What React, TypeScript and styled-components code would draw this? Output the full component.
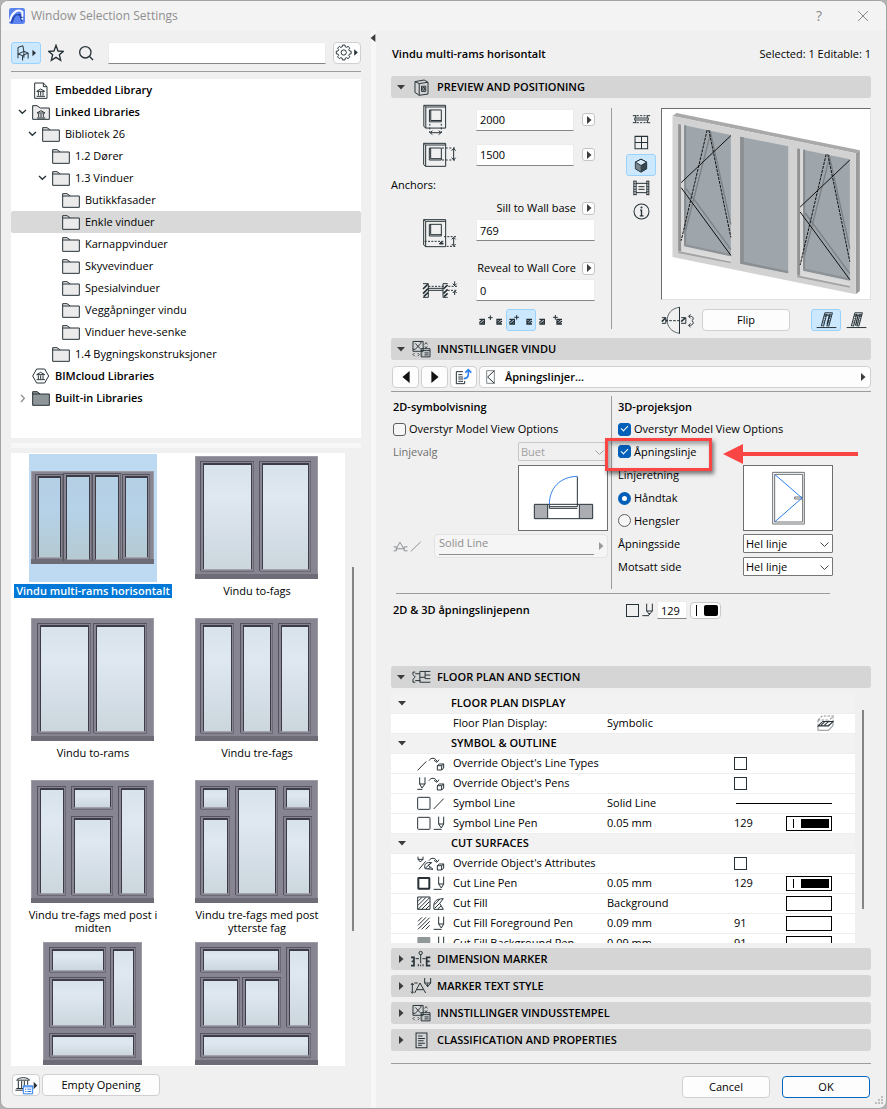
import React from "react";
import type { ReactNode } from "react";
import styled, { createGlobalStyle, css } from "styled-components";

const INK = "#263238";
const BLUE = "#2f80ed";
const FONT = '"Open Sans", "Noto Sans", "Liberation Sans", sans-serif';
const BOLD = 600;

const GlobalStyle = createGlobalStyle`
  *, *::before, *::after { box-sizing: border-box; }
  body { margin: 0; background: #b4b2b2; font: 11px/14px ${FONT}; color: #000; }
  button, input, select { font: inherit; color: inherit; margin: 0; }
  button { cursor: default; }
`;

/* ---------- shell ---------- */
const Dialog = styled.div`
  position: relative;
  display: flex;
  flex-direction: column;
  height: 100vh;
  background: #f0f0f0;
  border: 1px solid #a3a3a3;
  border-radius: 8px;
  overflow: hidden;
`;
const TitleBar = styled.header`
  display: flex;
  align-items: center;
  gap: 6px;
  flex: 0 0 30px;
  padding: 0 8px;
  background: #f3f3f3;
`;
const Title = styled.h1`
  flex: 1;
  margin: 0;
  font-size: 12px;
  line-height: 16px;
  font-weight: 400;
  color: #8f8f8f;
`;
const CaptionButton = styled.button`
  display: flex;
  align-items: center;
  justify-content: center;
  width: 30px;
  height: 24px;
  margin-left: 8px;
  padding: 0;
  border: 0;
  background: none;
  font-size: 14px;
  color: #8a8a8a;
`;
const Main = styled.main`
  flex: 1;
  min-height: 0;
  display: grid;
  grid-template-columns: minmax(0, 370fr) 5px minmax(0, 510fr);
  grid-template-rows: minmax(0, 1fr);
`;
const Left = styled.section`
  display: flex;
  flex-direction: column;
  min-height: 0;
  padding: 10px 10px 12px;
`;
const Splitter = styled.div`
  background: #f7f7f7;
  padding-top: 3px;
  svg { display: block; margin-left: -2px; }
`;
const Right = styled.section`
  display: flex;
  flex-direction: column;
  min-height: 0;
  padding: 0 15px 10px;
`;
const Rule = styled.hr<{ $top?: number; $bottom?: number }>`
  flex: none;
  height: 1px;
  width: 100%;
  margin: ${(p) => p.$top ?? 0}px 0 ${(p) => p.$bottom ?? 0}px;
  border: 0;
  background: #9c9c9c;
`;
const PenRule = styled.hr`
  width: 434px;
  height: 1px;
  margin: 0 0 0 5px;
  border: 0;
  background: #9c9c9c;
`;

/* ---------- controls ---------- */
const PushButton = styled.button<{ $width?: number; $primary?: boolean }>`
  display: flex;
  flex: none;
  align-items: center;
  justify-content: center;
  height: 22px;
  width: ${(p) => (p.$width ? p.$width + "px" : "auto")};
  padding: 0;
  background: #fdfdfd;
  border: 1px solid ${(p) => (p.$primary ? "#0067c0" : "#d0d0d0")};
  border-radius: 4px;
`;
const ToolButton = styled.button<{ $active?: boolean }>`
  display: flex;
  flex: none;
  align-items: center;
  justify-content: center;
  width: 30px;
  height: 22px;
  padding: 0;
  border: 1px solid ${(p) => (p.$active ? "#99d1ff" : "transparent")};
  border-radius: 3px;
  background: ${(p) => (p.$active ? "#cce8ff" : "transparent")};
`;
const PopButton = styled.button`
  display: flex;
  align-items: center;
  justify-content: center;
  width: 13px;
  height: 13px;
  padding: 0;
  background: #fdfdfd;
  border: 1px solid #c4c4c4;
  border-radius: 3px;
`;
const TextField = styled.input<{ $width?: number; $height?: number }>`
  width: ${(p) => (p.$width ? p.$width + "px" : "100%")};
  height: ${(p) => p.$height ?? 22}px;
  min-width: 0;
  padding: 0 3px;
  background: #fff;
  border: 1px solid #ececec;
  border-bottom-color: #868686;
  border-radius: 0;
  outline: none;
`;
const CheckBox = styled.input.attrs({ type: "checkbox" })<{ $square?: boolean }>`
  appearance: none;
  flex: none;
  display: grid;
  place-items: center;
  width: 13px;
  height: 13px;
  margin: 0;
  background: ${(p) => (p.$square ? "transparent" : "#f6f6f6")};
  border: 1px solid ${(p) => (p.$square ? INK : "#5e5e5e")};
  border-radius: ${(p) => (p.$square ? 0 : 3)}px;
  &:checked { background: #005fb8; border-color: #005fb8; }
  &:checked::after {
    content: "";
    width: 7px;
    height: 4px;
    border-left: 1px solid #fff;
    border-bottom: 1px solid #fff;
    transform: rotate(-45deg) translate(1px, -1px);
  }
`;
const Radio = styled.input.attrs({ type: "radio" })`
  appearance: none;
  flex: none;
  width: 13px;
  height: 13px;
  margin: 0;
  border: 1px solid #5e5e5e;
  border-radius: 50%;
  background: #f6f6f6;
  &:checked { border: 4px solid #005fb8; background: #fff; }
`;
const SelectBox = styled.span<{ $disabled?: boolean }>`
  position: relative;
  display: block;
  width: 90px;
  height: 19px;
  color: ${(p) => (p.$disabled ? "#a0a0a0" : "#000")};
  select {
    appearance: none;
    width: 100%;
    height: 100%;
    padding: 0 18px 0 2px;
    border: 1px solid ${(p) => (p.$disabled ? "#c8c8c8" : "#767676")};
    border-radius: 1px;
    background: ${(p) => (p.$disabled ? "#f0f0f0" : "#fff")};
    color: inherit;
    opacity: 1;
  }
  svg { position: absolute; right: 4px; top: 8px; pointer-events: none; }
`;

function Select({ label, value, disabled }: { label: string; value: string; disabled?: boolean }) {
  return (
    <SelectBox $disabled={disabled}>
      <select aria-label={label} defaultValue={value} disabled={disabled}>
        <option>{value}</option>
      </select>
      <svg width="9" height="6" viewBox="0 0 9 6" fill="none" stroke={disabled ? "#a0a0a0" : "#444"}>
        <path d="M.5 .5 4.5 4.5 8.5 .5" />
      </svg>
    </SelectBox>
  );
}

/* ---------- drawings: view boxes are in thirds of a pixel ---------- */
type ArtProps = { box: [number, number, number, number]; children: ReactNode; color?: string; sw?: number };
function Art({ box, children, color = INK, sw = 3 }: ArtProps) {
  return (
    <svg
      aria-hidden="true"
      width={Math.round(box[2] / 3)}
      height={Math.round(box[3] / 3)}
      viewBox={box.join(" ")}
      fill="none"
      stroke={color}
      strokeWidth={sw}
    >
      {children}
    </svg>
  );
}
type TriangleProps = { down?: boolean; left?: boolean; color?: string; size?: number };
const Triangle = ({ down, left, color = "#3c3c3c", size = 10 }: TriangleProps) => (
  <svg aria-hidden="true" width={size} height={size} viewBox="0 0 10 10" fill={color}>
    <path d={down ? "M1 3H9L5 7.500Z" : left ? "M8 0V10L2 5Z" : "M3 1V9L7.500 5Z"} />
  </svg>
);

const LogoIcon = () => (
  <svg aria-hidden="true" width="16" height="16" viewBox="0 0 48 48">
    <rect width="48" height="48" rx="7" fill="#5b84ee" />
    <path d="M4 44C10 20 28 12 40 20V42C32 40 36 24 26 22 18 22 14 34 12 44Z" fill="#2545b5" />
    <path d="M3 38C9 12 28 1 40 12V24" fill="none" stroke="#fff" strokeWidth="6" strokeLinecap="round" />
    <circle cx="40" cy="32" r="3" fill="#fff" />
  </svg>
);
const ChairIcon = () => (
  <Art box={[50, 130, 64, 54]}>
    <path d="M56 173V140L71 135 74 152M56 160 74 152 87 157 70 165ZM70 165V180M87 157V174M74 152V172" />
    <path d="M100 147V167L111 157Z" fill={INK} stroke="none" />
  </Art>
);
const StarIcon = () => (
  <Art box={[144, 130, 48, 54]} sw={4}>
    <path d="M168 134 174 151 190 152 178 162 182 179 168 170 154 179 158 162 146 152 162 151Z" />
  </Art>
);
const SearchIcon = () => (
  <Art box={[234, 132, 48, 48]} sw={4}>
    <circle cx="256" cy="154" r="17" />
    <path d="M268 166 279 177" />
  </Art>
);
const GearIcon = () => {
  const pts: string[] = [];
  for (let i = 0; i < 8; i++) {
    for (const [o, r] of [[-15, 18], [-10, 23], [10, 23], [15, 18]]) {
      const a = ((i * 45 + o) * Math.PI) / 180;
      pts.push(`${(26 + r * Math.cos(a)).toFixed(1)},${(26 + r * Math.sin(a)).toFixed(1)}`);
    }
  }
  return (
    <Art box={[0, 0, 72, 52]}>
      <polygon points={pts.join(" ")} />
      <circle cx="26" cy="26" r="8" />
      <path d="M58 16V36L69 26Z" fill={INK} stroke="none" />
    </Art>
  );
};
const Temple = ({ x, y }: { x: number; y: number }) => (
  <g transform={`translate(${x} ${y})`}>
    <path d="M0 7 12 0 24 7ZM5 9V20M12 9V20M19 9V20M0 22H25" />
  </g>
);
type TreeKind = "file" | "linked" | "folder" | "cloud" | "builtin";
const TreeIcon = ({ kind }: { kind: TreeKind }) => {
  if (kind === "file")
    return (
      <Art box={[0, 0, 54, 51]}>
        <path d="M8 3H34L45 14V49H8ZM34 3V14H45" />
        <Temple x={14} y={21} />
      </Art>
    );
  if (kind === "cloud")
    return (
      <Art box={[0, 0, 54, 48]}>
        <path d="M2 24 14 3H38L50 24 38 45H14Z" />
        <Temple x={14} y={13} />
      </Art>
    );
  return (
    <Art box={[0, 0, 54, 45]}>
      <path d="M2 43V2H15L25 9H52V43Z" fill={kind === "builtin" ? "#8f9699" : "#ebebeb"} />
      {kind !== "linked" && <path d="M2 9H25" />}
      {kind === "linked" && <Temple x={15} y={17} />}
    </Art>
  );
};
const BoxWindow = () => <path d="M131 194H197V263H137L131 258ZM137 199V263M131 194 137 199H197M148 208H184V244H148ZM152 208V240H184" />;
const WidthIcon = () => (
  <Art box={[126, 190, 105, 97]}>
    <BoxWindow />
    <path d="M149 250V283M184 250V283" strokeDasharray="6 5" />
    <path d="M151 277H182M157 271 150 277 157 283M176 271 183 277 176 283" />
  </Art>
);
const HeightIcon = () => (
  <Art box={[126, 190, 105, 78]}>
    <BoxWindow />
    <path d="M186 208H228M186 244H228" strokeDasharray="6 5" />
    <path d="M221 211V241M215 216 221 209 227 216M215 237 221 244 227 237" />
  </Art>
);
const SillIcon = () => (
  <Art box={[126, 534, 105, 90]}>
    <path d="M131 539H197V620H137L131 615ZM137 544V620M131 539 137 544H197M148 553H184V588H148ZM152 553V584H184" />
    <path d="M134 604H190M192 590H228M200 619H228" strokeDasharray="6 4" />
    <path d="M178 612 184 605 190 612Z" fill={INK} />
    <path d="M221 593V616M215 598 221 592 227 598M215 612 221 618 227 612" />
  </Art>
);
const RevealIcon = () => (
  <Art box={[123, 726, 108, 54]}>
    <path d="M126 734H142V775H126M200 734H186V775H200M142 748H186M142 754H186" />
    <path d="M126 750 140 736M126 764 141 749M128 773 141 761M187 750 200 738M187 764 200 751M189 773 200 763" strokeWidth="5" />
    <path d="M142 742H228M200 754H228" strokeDasharray="6 4" />
    <path d="M221 727V740M221 768V756M215 734 221 740 227 734M215 762 221 756 227 762" />
  </Art>
);
const AnchorIcon = ({ mode }: { mode: number }) => (
  <Art box={[0, 0, 78, 33]}>
    <path d="M4 13H19V27H4M4 23 15 13M7 28 19 18" strokeWidth="4" />
    <path d="M72 13H57V27H72M57 24 68 13M60 28 72 18" strokeWidth="4" />
    <path d={mode === 0 ? "M37 1V15M30 8H44" : mode === 1 ? "M26 0V14M19 7H33" : "M52 0V14M45 7H59"} />
  </Art>
);
const PlanIcon = () => (
  <Art box={[755, 222, 56, 30]}>
    <path d="M757 227H767L762 237 767 248H757M809 227H799L804 237 799 248H809M764 234H802M764 240H802" />
    <path d="M769 227H798M769 248H798" strokeDasharray="6 4" />
  </Art>
);
const GridIcon = () => (
  <Art box={[760, 286, 44, 44]}>
    <path d="M763 290H800V326H763ZM782 290V326M763 308H800" />
  </Art>
);
const CubeIcon = () => (
  <Art box={[762, 354, 42, 44]}>
    <path d="M783 357 800 366V386L783 396 766 386V366Z" fill="#37474f" />
    <path d="M783 357 800 366 783 376 766 366Z" fill="#d8eafa" />
    <path d="M767 368 782 377V394L767 385Z" fill="#78868e" stroke="none" />
  </Art>
);
const SectionViewIcon = () => (
  <Art box={[755, 422, 56, 48]}>
    <path d="M760 424V468M767 424V468M799 424V468M805 424V468M767 432H799M767 460H799M774 442H792M774 450H792" />
    <path d="M763 424V468M802 424V468" strokeWidth="6" strokeDasharray="3 5" />
  </Art>
);
const InfoIcon = () => (
  <Art box={[757, 496, 50, 50]}>
    <circle cx="782" cy="521" r="22" />
    <path d="M778 517H782V534M777 534H788" strokeWidth="4" />
    <circle cx="782" cy="509" r="3" fill={INK} stroke="none" />
  </Art>
);
const SwingIcon = () => (
  <Art box={[186, 615, 104, 87]}>
    <path d="M241 619C216 622 204 640 204 658S216 693 241 697" stroke="#5d676c" />
    <path d="M241 618V698M188 650H200V667H188M246 650H260V667H246" />
    <path d="M188 662 199 651M246 662 258 651M200 659H206" strokeWidth="5" />
    <path d="M210 659H240" strokeDasharray="8 4" />
    <path d="M270 646C282 644 286 654 278 659M270 673C282 674 286 664 278 659M274 640 268 646 274 652M274 667 268 673 274 679" />
  </Art>
);
const HingeIcon = ({ mode }: { mode: number }) => (
  <Art box={[0, 0, 64, 54]}>
    <path d="M2 50H62" />
    <path d="M16 46 27 5H50L39 46M23 46 33 8M33 46 43 8" />
    <path d={mode ? "M29 44 37 12M26 12H48" : "M26 12 44 12M34 40 41 12"} strokeWidth="4" />
    <path d="M20 46 30 8M36 46 46 8" strokeWidth="6" strokeDasharray="2 4" />
  </Art>
);
const PreviewHeadIcon = () => (
  <Art box={[100, 114, 46, 52]}>
    <path d="M103 122 131 117 143 124V160L116 164 103 155ZM103 122 116 128V164M116 128 143 124M123 136H136V152H123ZM127 140H132V148H127Z" />
  </Art>
);
const SettingsHeadIcon = () => (
  <Art box={[94, 14, 58, 54]}>
    <path d="M97 18H128V48H97ZM104 24 121 42M121 24 104 42M97 42H104M121 18V24M122 40H149V65H122ZM122 46H149M132 53H145M132 59H145" />
    <path d="M126 53H128M126 59H128M133 27 137 21 141 27M133 33 137 38 141 33M102 53 97 58 102 63M111 53 116 58 111 63" strokeWidth="2.500" />
  </Art>
);
const FloorHeadIcon = () => (
  <Art box={[94, 30, 58, 42]}>
    <path d="M97 36H104M97 67H104M97 36V44L104 51 97 58V67M104 41H118V34H150M104 62H120M118 41V67H150M118 52H134M134 34V56M134 45H150M134 56H150" />
  </Art>
);
const DimensionIcon = () => (
  <Art box={[90, 60, 66, 54]}>
    <path d="M93 82H102V107H93M151 82H140V107H151M95 94H102M140 94H149" strokeWidth="5" />
    <circle cx="122" cy="69" r="5" />
    <path d="M122 74V100M107 86H117M127 86H137M122 104V109M115 102V109M129 102V109" />
  </Art>
);
const MarkerTextIcon = () => (
  <Art box={[90, 142, 66, 54]}>
    <path d="M97 163V188M93 166 97 160 101 166M93 186 97 191 101 186M104 190 120 160 137 190M111 180H131M103 160H113M134 145V160L143 171 152 160V145M134 160H152M143 162V171" />
  </Art>
);
const ListIcon = () => (
  <Art box={[104, 304, 38, 50]}>
    <path d="M107 307H139V350H107ZM113 316H126M113 323H133M113 330H129M113 337H133M113 343H124" />
  </Art>
);
const PageUpIcon = () => (
  <Art box={[224, 100, 54, 54]}>
    <path d="M248 111H228V147H253V139M234 120H246M234 127H248M234 133H248M234 140H248" />
    <path d="M250 132C264 132 265 122 264 109M255 114 264 105 273 114" stroke={BLUE} strokeWidth="5" />
  </Art>
);
const OpeningIcon = () => (
  <Art box={[322, 106, 30, 42]}>
    <path d="M324 108H347V146H324Z" stroke="#80888c" />
    <path d="M347 108 327 127 347 146" />
  </Art>
);
const LineJoinIcon = () => (
  <Art box={[44, 614, 88, 38]} color="#8c9194">
    <path d="M46 634H54V646H46M54 640 65 620 77 640M54 640H77M88 634H78V646H88M98 648 128 619" />
  </Art>
);
const PenIcon = () => (
  <Art box={[0, 0, 36, 42]}>
    <path d="M14 2V24L22 34 31 24V2M14 24H31M22 30V36M1 38H21" />
  </Art>
);
const LibraryIcon = () => (
  <Art box={[0, 0, 69, 56]}>
    <path d="M5 12C12 2 38 2 44 12ZM10 14V36M20 14V36M28 14V30M38 14V26M1 42H24M4 37H24" />
    <path d="M25 29H53V53H25Z" fill="#fff" stroke={BLUE} />
    <path d="M25 32H53M30 39H34M37 39H49M30 46H34M37 46H49" stroke={BLUE} />
    <path d="M56 17V39L67 28Z" fill={INK} stroke="none" />
  </Art>
);

type RowIconKind = "lineOv" | "penOv" | "line" | "pen" | "attrOv" | "cutPen" | "fill" | "fgPen" | "bgPen";
const OverrideMark = () => (
  <path d="M36 14C42 4 54 4 60 16M51 13 60 19 66 11M61 29H74V42H61ZM61 29 67 24H80V36L74 42M74 29 80 24" />
);
const PenMark = () => <path d="M65 2V24L73 36 80 24V2M65 24H80M50 40H74" />;
const RowIcon = ({ kind }: { kind: RowIconKind }) => (
  <Art box={[0, 0, 84, 45]}>
    {kind === "lineOv" && <path d="M2 43 28 16" />}
    {kind === "penOv" && <path d="M8 4V24L15 36 24 24V4M8 24H24M1 40H16" />}
    {kind === "attrOv" && <path d="M3 2V10L10 18 18 10V2M3 10H18M6 40 26 16M24 38C20 22 30 18 44 20L34 28 48 40ZM26 36 40 22M34 38 40 34" />}
    {(kind === "lineOv" || kind === "penOv" || kind === "attrOv") && <OverrideMark />}
    {(kind === "line" || kind === "pen") && <rect x="2" y="4" width="37" height="36" rx="2" />}
    {kind === "cutPen" && <rect x="4" y="6" width="33" height="32" rx="1" strokeWidth="6" />}
    {kind === "line" && <path d="M50 39 80 8" />}
    {(kind === "pen" || kind === "cutPen" || kind === "fgPen" || kind === "bgPen") && <PenMark />}
    {(kind === "fill" || kind === "fgPen") && (
      <path d="M3 16 15 4M3 28 27 4M3 40 38 5M14 40 38 16M26 40 38 28" />
    )}
    {kind === "fill" && (
      <path d="M2 3H39V40H2ZM51 40C48 18 54 9 79 8L68 22 79 40ZM53 26 68 10M53 37 68 22M62 39 72 30" />
    )}
    {kind === "bgPen" && <rect x="1" y="3" width="39" height="38" rx="3" fill="#929799" stroke="none" />}
  </Art>
);
const PlanDisplayIcon = () => (
  <Art box={[472, 163, 50, 50]} color="#8c9194">
    <path d="M475 178 487 166H519L507 180V194M519 166V182M475 178H507M475 178V192" strokeDasharray="7 4" />
    <path d="M475 195V208H506L519 194V182" />
    <path d="M475 195 489 182H519L506 195ZM484 193 494 184M494 193 504 184" stroke={INK} />
  </Art>
);

/* ---------- left pane ---------- */
const Toolbar = styled.div`
  display: flex;
  flex: 0 0 23px;
  align-items: center;
  gap: 7px;
`;
const IconButton = styled.button`
  display: flex;
  flex: none;
  align-items: center;
  justify-content: center;
  width: 16px;
  height: 22px;
  margin-right: 7px;
  padding: 0;
  border: 0;
  background: none;
`;
const Tree = styled.ul`
  flex: 359 1 0;
  min-height: 0;
  margin: 0;
  padding: 0;
  list-style: none;
  background: #fff;
  overflow: hidden;
`;
const TreeRow = styled.li<{ $level: number; $selected?: boolean; $bold?: boolean }>`
  display: flex;
  align-items: center;
  height: 22px;
  padding-left: ${(p) => 6 + 10 * p.$level}px;
  border-radius: 2px;
  background: ${(p) => (p.$selected ? "#d9d9d9" : "transparent")};
  font-weight: ${(p) => (p.$bold ? BOLD : 400)};
`;
const Twist = styled.span`
  display: flex;
  align-items: center;
  justify-content: center;
  width: 11px;
  margin-right: 4px;
`;
const TreeGlyph = styled.span`
  display: flex;
  width: 18px;
  margin-right: 5px;
`;
const Grip = styled.div`
  flex: 0 0 5px;
  margin: 5px 0;
  background: #f7f7f7;
`;
const Browser = styled.div`
  display: flex;
  flex: 613 1 0;
  min-height: 0;
`;
const ThumbGrid = styled.ul`
  flex: 1;
  display: grid;
  grid-template-columns: repeat(auto-fill, 164px);
  grid-auto-rows: 162px;
  margin: 0;
  padding: 1px 0 0;
  list-style: none;
  background: #fff;
  overflow: hidden;
`;
const ThumbItem = styled.li<{ $selected?: boolean }>`
  display: flex;
  flex-direction: column;
  align-items: center;
  gap: 2px;
  line-height: 13px;
  text-align: center;
  svg { flex: none; background: ${(p) => (p.$selected ? "#bddaf2" : "transparent")}; }
  span {
    max-width: 160px;
    padding: 0 2px 1px;
    ${(p) => p.$selected && css`background: #0078d7; color: #fff; font-weight: ${BOLD}; white-space: nowrap;`}
  }
`;
const Scroll = styled.div<{ $gutter: number; $before: number; $size: number; $after: number }>`
  display: flex;
  flex-direction: column;
  flex: 0 0 ${(p) => p.$gutter}px;
  align-items: center;
  &::before { content: ""; flex: ${(p) => p.$before} 1 0; }
  &::after { content: ""; flex: ${(p) => p.$after} 1 0; }
  i { flex: ${(p) => p.$size} 1 0; width: 2px; background: #858585; }
`;
const LeftFooter = styled.div`
  display: flex;
  gap: 2px;
  padding: 8px 0 0 1px;
`;

type Pane = [number, number, number, number];
type Thumb = { name?: string; frame: Pane; panes: Pane[]; selected?: boolean };
const FULL: Pane = [2, 2, 125, 125];
const thumbs: Thumb[] = [
  { name: "Vindu multi-rams horisontalt", selected: true, frame: [2, 17, 125, 110], panes: [[10, 24, 31, 103], [38, 23, 60, 105], [67, 23, 89, 105], [97, 24, 118, 103]] },
  { name: "Vindu to-fags", frame: FULL, panes: [[11, 11, 58, 115], [70, 11, 115, 115]] },
  { name: "Vindu to-rams", frame: FULL, panes: [[12, 11, 59, 115], [68, 11, 115, 115]] },
  { name: "Vindu tre-fags", frame: FULL, panes: [[11, 11, 38, 115], [51, 11, 77, 115], [89, 11, 115, 115]] },
  { name: "Vindu tre-fags med post i midten", frame: FULL, panes: [[12, 12, 34, 115], [46, 12, 81, 29], [46, 42, 81, 115], [93, 12, 115, 115]] },
  { name: "Vindu tre-fags med post ytterste fag", frame: FULL, panes: [[11, 12, 34, 29], [11, 42, 34, 115], [46, 12, 82, 115], [94, 12, 116, 29], [94, 42, 116, 115]] },
  { frame: [14, 2, 113, 125], panes: [[24, 11, 74, 30], [24, 41, 74, 85], [85, 11, 104, 85], [24, 97, 104, 115]] },
  { frame: FULL, panes: [[11, 11, 85, 30], [11, 41, 44, 85], [53, 41, 85, 85], [97, 11, 115, 85], [11, 97, 115, 115]] },
];
function WindowThumb({ t }: { t: Thumb }) {
  const [x1, y1, x2, y2] = t.frame;
  return (
    <svg width="128" height="128" viewBox="0 0 128 128" shapeRendering="crispEdges" aria-hidden="true">
      <rect x={x1} y={y1} width={x2 - x1} height={y2 - y1} fill="#868591" />
      <path d={`M${x1 + 0.5} ${y2 - 0.5}V${y1 + 0.5}H${x2 - 0.5}V${y2 - 0.5}`} fill="none" stroke="#9d9da5" />
      <rect x={x1} y={y2 - 5} width={x2 - x1} height="5" fill="#6d6c77" />
      {t.panes.map(([a, b, c, d]) => (
        <g key={`${a}-${b}`}>
          <path d={`M${a - 3.5} ${d + 2}V${b - 3.5}H${c + 3}`} fill="none" stroke="#55545e" />
          <path d={`M${c + 2.5} ${b - 3}V${d + 2.5}H${a - 3}`} fill="none" stroke="#6b6a75" />
          <rect x={a - 1} y={b - 2} width={c - a + 2} height={d - b + 2} fill="#3d3c46" />
          <rect x={a} y={b} width={c - a} height={d - b} fill={t.selected ? "url(#glassSel)" : "url(#glass)"} />
          <rect x={a} y={d} width={c - a} height="1" fill="#a2a2ac" />
        </g>
      ))}
    </svg>
  );
}
const Gradients = styled.svg`
  position: absolute;
`;

type TreeNode = { level: number; text: string; kind: TreeKind; open?: boolean; closed?: boolean; bold?: boolean; selected?: boolean };
const nodes: TreeNode[] = [
  { level: 0, text: "Embedded Library", kind: "file", bold: true },
  { level: 0, text: "Linked Libraries", kind: "linked", bold: true, open: true },
  { level: 1, text: "Bibliotek 26", kind: "folder", open: true },
  { level: 2, text: "1.2 Dører", kind: "folder" },
  { level: 2, text: "1.3 Vinduer", kind: "folder", open: true },
  { level: 3, text: "Butikkfasader", kind: "folder" },
  { level: 3, text: "Enkle vinduer", kind: "folder", selected: true },
  { level: 3, text: "Karnappvinduer", kind: "folder" },
  { level: 3, text: "Skyvevinduer", kind: "folder" },
  { level: 3, text: "Spesialvinduer", kind: "folder" },
  { level: 3, text: "Veggåpninger vindu", kind: "folder" },
  { level: 3, text: "Vinduer heve-senke", kind: "folder" },
  { level: 2, text: "1.4 Bygningskonstruksjoner", kind: "folder" },
  { level: 0, text: "BIMcloud Libraries", kind: "cloud", bold: true },
  { level: 0, text: "Built-in Libraries", kind: "builtin", bold: true, closed: true },
];

/* ---------- right pane ---------- */
const ObjectRow = styled.div`
  display: flex;
  align-items: center;
  justify-content: space-between;
  flex: 0 0 45px;
  padding-left: 1px;
  strong { font-weight: ${BOLD}; }
`;
const SectionHead = styled.button`
  display: flex;
  align-items: center;
  flex: 0 0 22px;
  width: 100%;
  padding: 0 0 0 5px;
  border: 0;
  border-radius: 3px;
  background: #d5d5d5;
  font-weight: ${BOLD};
  text-align: left;
`;
const HeadIcon = styled.span`
  display: flex;
  align-items: center;
  justify-content: center;
  width: 28px;
  margin: 0 2px 0 1px;
`;
function Section({ title, icon, open }: { title: string; icon: ReactNode; open?: boolean }) {
  return (
    <SectionHead aria-expanded={!!open}>
      <Triangle down={open} />
      <HeadIcon>{icon}</HeadIcon>
      {title}
    </SectionHead>
  );
}
const Positioning = styled.div`
  display: grid;
  grid-template-columns: 220px 1px minmax(0, 1fr);
  flex: 0 0 240px;
`;
const VLine = styled.div<{ $top: number; $bottom: number }>`
  width: 1px;
  margin: ${(p) => p.$top}px 0 ${(p) => p.$bottom}px;
  background: #9c9c9c;
`;
const Form = styled.div`
  display: grid;
  grid-template-columns: 85px 119px;
  grid-template-rows: 35px 35px 26px 60px 51px 22px;
  padding-top: 4px;
`;
const FormIcon = styled.span<{ $low?: boolean }>`
  display: flex;
  align-items: ${(p) => (p.$low ? "flex-end" : "center")};
  padding: 0 0 ${(p) => (p.$low ? 10 : 0)}px 31px;
`;
const RevealCell = styled(FormIcon)`
  padding-bottom: 0;
`;
const InputRow = styled.div`
  display: flex;
  align-items: center;
  gap: 8px;
`;
const Caption = styled.span`
  align-self: center;
`;
const Stack = styled.div`
  display: flex;
  flex-direction: column;
  gap: 1px;
`;
const CaptionRow = styled.label`
  display: flex;
  align-items: center;
  justify-content: flex-end;
  gap: 6px;
  height: 20px;
  white-space: nowrap;
`;
const ButtonRow = styled.div`
  display: flex;
`;
const Viewer = styled.div`
  display: grid;
  grid-template-columns: 30px minmax(0, 1fr);
  grid-template-rows: 192px 22px;
  gap: 9px 5px;
  padding: 10px 0 0 14px;
`;
const ViewModes = styled.div`
  display: flex;
  flex-direction: column;
  gap: 1px;
`;
const Canvas = styled.div`
  border: 1px solid #e2e2e2;
  border-top-color: #6e6e6e;
  border-left-color: #6e6e6e;
  background: #fff;
  svg { display: block; width: 100%; height: 100%; }
`;
const ViewFooter = styled.div`
  grid-column: 2;
  display: flex;
  align-items: center;
  gap: 6px;
`;
const HingeRow = styled(ButtonRow)`
  margin-left: auto;
`;
const NavRow = styled.div`
  display: grid;
  grid-template-columns: 27px 27px 27px minmax(0, 1fr);
  gap: 2px;
  padding: 6px 0 3px 1px;
`;
const PageButton = styled(PushButton)`
  justify-content: flex-start;
  gap: 9px;
  padding: 0 2px 0 6px;
  font-weight: ${BOLD};
  span { flex: 1; text-align: left; }
`;
const Columns = styled.div`
  position: relative;
  display: grid;
  grid-template-columns: 220px 1px minmax(0, 1fr);
  padding: 4px 0;
  height: 201px;
`;
const Col2D = styled.div`
  display: flex;
  flex-direction: column;
  padding: 0 3px 0 2px;
`;
const Col3D = styled.div`
  display: flex;
  flex-direction: column;
  padding-left: 6px;
`;
const SubTitle = styled.h2`
  display: flex;
  align-items: center;
  height: 22px;
  margin: 0;
  font-size: 11px;
  font-weight: ${BOLD};
`;
const Line = styled.div<{ $h?: number; $muted?: boolean }>`
  display: flex;
  align-items: center;
  justify-content: space-between;
  height: ${(p) => p.$h ?? 23}px;
  color: ${(p) => (p.$muted ? "#6f6f6f" : "#000")};
`;
const Option = styled.label`
  display: flex;
  align-items: center;
  gap: 3px;
  white-space: nowrap;
`;
const Picture = styled.div`
  width: 90px;
  height: 66px;
  border: 1px solid #6e6e6e;
  background: #fff;
  svg { display: block; }
`;
const PictureLine = styled.div<{ $after?: number }>`
  display: flex;
  justify-content: flex-end;
  padding: 2px 0 ${(p) => p.$after ?? 0}px;
`;
const Split = styled.div`
  display: grid;
  grid-template-columns: 125px 90px;
`;
const LineTypeField = styled.button`
  display: flex;
  align-items: center;
  gap: 2px;
  width: 174px;
  height: 24px;
  padding: 0 1px 0 4px;
  border: 1px solid #e3e3e3;
  border-radius: 4px;
  background: #f5f5f5;
  color: #8c8c8c;
  text-align: left;
  span { flex: 1; height: 18px; line-height: 12px; border-bottom: 1px solid #8c8c8c; }
`;
const PenRow = styled.div`
  display: grid;
  grid-template-columns: 233px 1fr;
  align-items: center;
  width: 439px;
  padding: 7px 0 0 2px;
  font-weight: ${BOLD};
`;
const PenControls = styled.div`
  display: flex;
  align-items: center;
  gap: 3px;
  font-weight: 400;
`;
const PenSwatch = styled.button`
  display: flex;
  align-items: center;
  justify-content: center;
  width: 31px;
  height: 17px;
  padding: 0;
  border: 1px solid #c9c9c9;
  border-radius: 4px;
  background: #fdfdfd;
`;
const Callout = styled.div`
  position: absolute;
  left: 214px;
  top: 46px;
  width: 107px;
  height: 33px;
  border: 3px solid #fa4545;
  box-shadow: 2px 3px 4px rgba(0, 0, 0, 0.5), inset 2px 3px 4px rgba(0, 0, 0, 0.35);
`;
const Pointer = styled.svg`
  position: absolute;
  left: 332px;
  top: 51px;
`;
const WindowSettings = styled.div`
  flex: 0 0 306px;
`;
const ListArea = styled.div`
  display: flex;
  flex: 1 1 0;
  min-height: 0;
  margin: 5px 0;
`;
const ListClip = styled.div`
  flex: 1;
  overflow: hidden;
  background: #fff;
`;
const PropTable = styled.table`
  width: 100%;
  table-layout: fixed;
  border-collapse: collapse;
  tr { height: 20px; }
  td, th { height: 20px; padding: 0; border-bottom: 1px solid #eeeeee; text-align: left; font-weight: 400; white-space: nowrap; }
  svg, input { display: block; }
`;
const GroupRow = styled.tr`
  background: #f2f2f2;
  th { font-weight: ${BOLD}; }
  svg { margin-left: 6px; }
`;
const GroupName = styled.span`
  margin-left: -2px;
`;
const IconCell = styled.td`
  svg { margin-left: 26px; }
`;
const ViewCell = styled.td`
  svg { margin-left: 31px; }
`;
const Swatch = styled.span`
  display: flex;
  align-items: center;
  width: 46px;
  height: 15px;
  border: 1px solid #000;
  background: #fff;
`;
const LineSample = styled.span`
  display: block;
  width: 96px;
  height: 1px;
  margin-left: 2px;
  background: #000;
`;
const HeadList = styled.div`
  display: flex;
  flex-direction: column;
  gap: 5px;
`;
const Actions = styled.div`
  display: flex;
  justify-content: flex-end;
  gap: 12px;
  padding-right: 1px;
`;
const Resize = styled.svg`
  position: absolute;
  right: 2px;
  bottom: 2px;
`;

type Prop = { group?: string; icon?: RowIconKind; name?: string; value?: string; check?: boolean; pen?: string; swatch?: "ink" | "empty"; line?: boolean; view?: boolean };
const props: Prop[] = [
  { group: "FLOOR PLAN DISPLAY" },
  { name: "Floor Plan Display:", value: "Symbolic", view: true },
  { group: "SYMBOL & OUTLINE" },
  { icon: "lineOv", name: "Override Object's Line Types", check: true },
  { icon: "penOv", name: "Override Object's Pens", check: true },
  { icon: "line", name: "Symbol Line", value: "Solid Line", line: true },
  { icon: "pen", name: "Symbol Line Pen", value: "0.05 mm", pen: "129", swatch: "ink" },
  { group: "CUT SURFACES" },
  { icon: "attrOv", name: "Override Object's Attributes", check: true },
  { icon: "cutPen", name: "Cut Line Pen", value: "0.05 mm", pen: "129", swatch: "ink" },
  { icon: "fill", name: "Cut Fill", value: "Background", swatch: "empty" },
  { icon: "fgPen", name: "Cut Fill Foreground Pen", value: "0.09 mm", pen: "91", swatch: "empty" },
  { icon: "bgPen", name: "Cut Fill Background Pen", value: "0.09 mm", pen: "91", swatch: "empty" },
];

function PropRow({ p }: { p: Prop }) {
  if (p.group)
    return (
      <GroupRow>
        <th><Triangle down /></th>
        <th colSpan={4}><GroupName>{p.group}</GroupName></th>
      </GroupRow>
    );
  return (
    <tr>
      <IconCell>{p.icon && <RowIcon kind={p.icon} />}</IconCell>
      <th scope="row">{p.name}</th>
      <td>{p.value}</td>
      {p.line ? (
        <td colSpan={2}><LineSample /></td>
      ) : (
        <>
          <td>{p.check ? <CheckBox $square aria-label={p.name} /> : p.pen}</td>
          {p.view ? (
            <ViewCell><PlanDisplayIcon /></ViewCell>
          ) : (
            <td>
              {p.swatch && (
                <Swatch>
                  {p.swatch === "ink" && (
                    <svg width="44" height="13" viewBox="0 0 44 13" shapeRendering="crispEdges" aria-hidden="true">
                      <path d="M6 2h1v9H6zM14 2h28v9H14z" />
                    </svg>
                  )}
                </Swatch>
              )}
            </td>
          )}
        </>
      )}
    </tr>
  );
}

function Sash({ dx, dy }: { dx: number; dy: number }) {
  return (
    <g transform={`translate(${dx} ${dy})`}>
      <path d="M234 74 252 78V440L392 472V490L234 458Z" fill="#dcdcdc" />
      <path d="M234 74 243 76V456L234 455Z" fill="#929292" />
      <path d="M234 455 392 487V492L234 461Z" fill="#a3a3a3" />
      <path d="M243 76 252 78V440L392 472V480L243 448Z" fill="#d9d9d9" />
      <path d="M252 78 392 107V470L252 438Z" fill="#9ea6ac" />
      <path d="M252 78H258V439L252 438Z" fill="#858b8f" />
      <path d="M252 434 392 464V471L252 441Z" fill="#8d9296" />
      <path d="M330 94 392 375M258 268 392 450M331 102 256 395" stroke="#7b8287" strokeWidth="4" fill="none" />
      <path d="M321 92 243 424M326 92 392 414" stroke="#111" strokeWidth="3" strokeDasharray="9 3" fill="none" />
      <path d="M392 109 243 250M243 265 392 468" stroke="#111" strokeWidth="3" fill="none" />
    </g>
  );
}
const WindowPreview = () => (
  <svg viewBox="187 29 621 570" role="img" aria-label="3D preview">
    <path d="M217 50 229 41 779 153 767 162Z" fill="#a9a9a9" />
    <path d="M767 162 779 153V575L767 585Z" fill="#9b9b9b" />
    <path d="M217 50 767 162V585L217 473Z" fill="#d2d2d2" />
    <Sash dx={0} dy={0} />
    <path d="M420 112 564 141V522L420 492Z" fill="#9ea6ac" />
    <path d="M420 112 431 114V487L564 515V522L420 493Z" fill="#8b8f92" />
    <Sash dx={357} dy={73} />
  </svg>
);

export default function App() {
  return (
    <>
      <GlobalStyle />
      <Dialog>
        <TitleBar>
          <LogoIcon />
          <Title>Window Selection Settings</Title>
          <CaptionButton aria-label="Help">?</CaptionButton>
          <CaptionButton aria-label="Close">
            <svg width="10" height="10" viewBox="0 0 10 10" stroke="#8a8a8a" fill="none"><path d="M0 0 10 10M10 0 0 10" /></svg>
          </CaptionButton>
        </TitleBar>
        <Main>
          <Left>
            <Toolbar>
              <ToolButton $active aria-label="Objects"><ChairIcon /></ToolButton>
              <IconButton aria-label="Favorites"><StarIcon /></IconButton>
              <IconButton aria-label="Search"><SearchIcon /></IconButton>
              <TextField aria-label="Search text" />
              <PushButton $width={28} aria-label="Options"><GearIcon /></PushButton>
            </Toolbar>
            <Rule $top={7} $bottom={7} />
            <Tree>
              {nodes.map((n) => (
                <TreeRow key={n.text} $level={n.level} $selected={n.selected} $bold={n.bold}>
                  <Twist>
                    {n.open && <Art box={[0, 0, 27, 18]} sw={4}><path d="M3 3 13 13 24 3" /></Art>}
                    {n.closed && <Art box={[0, 0, 18, 27]} sw={4} color="#8c8c8c"><path d="M3 3 13 13 3 24" /></Art>}
                  </Twist>
                  <TreeGlyph><TreeIcon kind={n.kind} /></TreeGlyph>
                  {n.text}
                </TreeRow>
              ))}
            </Tree>
            <Grip />
            <Browser>
              <Gradients width="0" height="0" aria-hidden="true">
                <defs>
                  <linearGradient id="glass" x1="0" y1="0" x2="0" y2="1">
                    <stop offset="0" stopColor="#d8e2eb" />
                    <stop offset="0.3" stopColor="#dfe8f1" />
                    <stop offset="1" stopColor="#ccd6dd" />
                  </linearGradient>
                  <linearGradient id="glassSel" x1="0" y1="0" x2="0" y2="1">
                    <stop offset="0" stopColor="#b5cfe4" />
                    <stop offset="0.4" stopColor="#b5d2e9" />
                    <stop offset="1" stopColor="#b5cad2" />
                  </linearGradient>
                </defs>
              </Gradients>
              <ThumbGrid>
                {thumbs.map((t, i) => (
                  <ThumbItem key={i} $selected={t.selected}>
                    <WindowThumb t={t} />
                    {t.name && <span>{t.name}</span>}
                  </ThumbItem>
                ))}
              </ThumbGrid>
              <Scroll $gutter={16} $before={114} $size={364} $after={135}><i /></Scroll>
            </Browser>
            <LeftFooter>
              <PushButton $width={28} aria-label="Library manager"><LibraryIcon /></PushButton>
              <PushButton $width={118}>Empty Opening</PushButton>
            </LeftFooter>
          </Left>
          <Splitter><Triangle left size={8} /></Splitter>
          <Right>
            <ObjectRow>
              <strong>Vindu multi-rams horisontalt</strong>
              <span>Selected: 1 Editable: 1</span>
            </ObjectRow>
            <Section open title="PREVIEW AND POSITIONING" icon={<PreviewHeadIcon />} />
            <Positioning>
              <Form>
                <FormIcon><WidthIcon /></FormIcon>
                <InputRow>
                  <TextField $width={98} aria-label="Width" defaultValue="2000" />
                  <PopButton aria-label="Width options"><Triangle /></PopButton>
                </InputRow>
                <FormIcon><HeightIcon /></FormIcon>
                <InputRow>
                  <TextField $width={98} aria-label="Height" defaultValue="1500" />
                  <PopButton aria-label="Height options"><Triangle /></PopButton>
                </InputRow>
                <Caption>Anchors:</Caption>
                <span />
                <FormIcon $low><SillIcon /></FormIcon>
                <Stack>
                  <CaptionRow htmlFor="sill">Sill to Wall base <PopButton aria-label="Sill options"><Triangle /></PopButton></CaptionRow>
                  <TextField id="sill" defaultValue="769" />
                </Stack>
                <FormIcon $low><RevealIcon /></FormIcon>
                <Stack>
                  <CaptionRow htmlFor="reveal">Reveal to Wall Core <PopButton aria-label="Reveal options"><Triangle /></PopButton></CaptionRow>
                  <TextField id="reveal" defaultValue="0" />
                </Stack>
                <span />
                <ButtonRow>
                  <ToolButton aria-label="Centre anchor"><AnchorIcon mode={0} /></ToolButton>
                  <ToolButton $active aria-label="Left anchor"><AnchorIcon mode={1} /></ToolButton>
                  <ToolButton aria-label="Right anchor"><AnchorIcon mode={2} /></ToolButton>
                </ButtonRow>
              </Form>
              <VLine $top={10} $bottom={9} />
              <Viewer>
                <ViewModes>
                  <ToolButton aria-label="Plan"><PlanIcon /></ToolButton>
                  <ToolButton aria-label="Elevation"><GridIcon /></ToolButton>
                  <ToolButton $active aria-label="3D"><CubeIcon /></ToolButton>
                  <ToolButton aria-label="Section"><SectionViewIcon /></ToolButton>
                  <ToolButton aria-label="Info"><InfoIcon /></ToolButton>
                </ViewModes>
                <Canvas><WindowPreview /></Canvas>
                <ViewFooter>
                  <SwingIcon />
                  <PushButton $width={88}>Flip</PushButton>
                  <HingeRow>
                    <ToolButton $active aria-label="Parallel to wall"><HingeIcon mode={0} /></ToolButton>
                    <ToolButton aria-label="Vertical"><HingeIcon mode={1} /></ToolButton>
                  </HingeRow>
                </ViewFooter>
              </Viewer>
            </Positioning>
            <Section open title="INNSTILLINGER VINDU" icon={<SettingsHeadIcon />} />
            <WindowSettings>
              <NavRow>
                <PushButton aria-label="Previous page"><Triangle left color="#111" size={12} /></PushButton>
                <PushButton aria-label="Next page">
                  <svg width="12" height="12" viewBox="0 0 10 10" fill="#111" aria-hidden="true"><path d="M2 0V10L8 5Z" /></svg>
                </PushButton>
                <PushButton aria-label="Up one level"><PageUpIcon /></PushButton>
                <PageButton><OpeningIcon /><span>Åpningslinjer...</span><Triangle /></PageButton>
              </NavRow>
              <Rule />
              <Columns>
                <Col2D>
                  <SubTitle>2D-symbolvisning</SubTitle>
                  <Line $h={22}><Option><CheckBox /> Overstyr Model View Options</Option></Line>
                  <Line $muted>Linjevalg <Select label="Linjevalg" value="Buet" disabled /></Line>
                  <PictureLine $after={3}>
                    <Picture>
                      <svg width="88" height="64" viewBox="417 393 264 192" fill="none" aria-hidden="true">
                        <path d="M463 508H503V551H463ZM598 508H638V551H598Z" fill="#acacb3" stroke={INK} strokeWidth="3" />
                        <path d="M503 508H598M508 515H592M508 520H592M503 551H598M592 425V515M508 508V520" stroke={INK} strokeWidth="3" />
                        <path d="M508 508C508 460 540 425 592 424" stroke={BLUE} strokeWidth="3" />
                      </svg>
                    </Picture>
                  </PictureLine>
                  <Line $h={24}>
                    <LineJoinIcon />
                    <LineTypeField disabled><span>Solid Line</span><Triangle color="#9a9a9a" /></LineTypeField>
                  </Line>
                </Col2D>
                <VLine $top={0} $bottom={0} />
                <Col3D>
                  <SubTitle>3D-projeksjon</SubTitle>
                  <Line $h={22}><Option><CheckBox defaultChecked /> Overstyr Model View Options</Option></Line>
                  <Line><Option><CheckBox defaultChecked /> Åpningslinje</Option></Line>
                  <Split>
                    <div>
                      <Line $h={24}>Linjeretning</Line>
                      <Line $h={22}><Option><Radio name="direction" defaultChecked /> Håndtak</Option></Line>
                      <Line><Option><Radio name="direction" /> Hengsler</Option></Line>
                    </div>
                    <PictureLine>
                      <Picture>
                        <svg width="88" height="64" viewBox="432 319 264 192" fill="none" aria-hidden="true">
                          <path d="M518 338H613V493H518ZM524 344H608V487H524ZM584 412H606V418H584Z" stroke="#6c7073" strokeWidth="3" />
                          <path d="M525 345 606 415 525 486" stroke={BLUE} strokeWidth="3" />
                        </svg>
                      </Picture>
                    </PictureLine>
                    <Line>Åpningsside</Line>
                    <Line><Select label="Åpningsside" value="Hel linje" /></Line>
                    <Line>Motsatt side</Line>
                    <Line><Select label="Motsatt side" value="Hel linje" /></Line>
                  </Split>
                </Col3D>
                <Callout />
                <Pointer width="136" height="24" viewBox="0 0 136 24" fill="#fa4545" aria-hidden="true">
                  <path d="M0 11 20 1V9H135V13H20V21Z" />
                </Pointer>
              </Columns>
              <PenRule />
              <PenRow>
                <span>2D &amp; 3D åpningslinjepenn</span>
                <PenControls>
                  <CheckBox $square aria-label="Use pen" />
                  <PenIcon />
                  <TextField $width={30} $height={18} aria-label="Pen number" defaultValue="129" />
                  <PenSwatch aria-label="Pen colour">
                    <svg width="24" height="11" viewBox="0 0 24 11" aria-hidden="true"><path d="M2 0H3V11H2ZM10 2Q10 0 12 0H22Q24 0 24 2V9Q24 11 22 11H12Q10 11 10 9Z" /></svg>
                  </PenSwatch>
                </PenControls>
              </PenRow>
            </WindowSettings>
            <Section open title="FLOOR PLAN AND SECTION" icon={<FloorHeadIcon />} />
            <ListArea>
              <ListClip>
                <PropTable>
                  <colgroup>
                    <col width="62" /><col width="154" /><col width="127" /><col width="52" /><col />
                  </colgroup>
                  <tbody>{props.map((p) => <PropRow key={p.group ?? p.name} p={p} />)}</tbody>
                </PropTable>
              </ListClip>
              <Scroll $gutter={16} $before={17} $size={199} $after={34}><i /></Scroll>
            </ListArea>
            <HeadList>
              <Section title="DIMENSION MARKER" icon={<DimensionIcon />} />
              <Section title="MARKER TEXT STYLE" icon={<MarkerTextIcon />} />
              <Section title="INNSTILLINGER VINDUSSTEMPEL" icon={<SettingsHeadIcon />} />
              <Section title="CLASSIFICATION AND PROPERTIES" icon={<ListIcon />} />
            </HeadList>
            <Rule $top={12} $bottom={12} />
            <Actions>
              <PushButton $width={88}>Cancel</PushButton>
              <PushButton $width={88} $primary>OK</PushButton>
            </Actions>
          </Right>
        </Main>
        <Resize width="10" height="10" viewBox="0 0 10 10" fill="#bdbdbd" aria-hidden="true">
          <path d="M7 0h2v2H7zM4 3h2v2H4zM7 3h2v2H7zM1 6h2v2H1zM4 6h2v2H4zM7 6h2v2H7z" />
        </Resize>
      </Dialog>
    </>
  );
}
